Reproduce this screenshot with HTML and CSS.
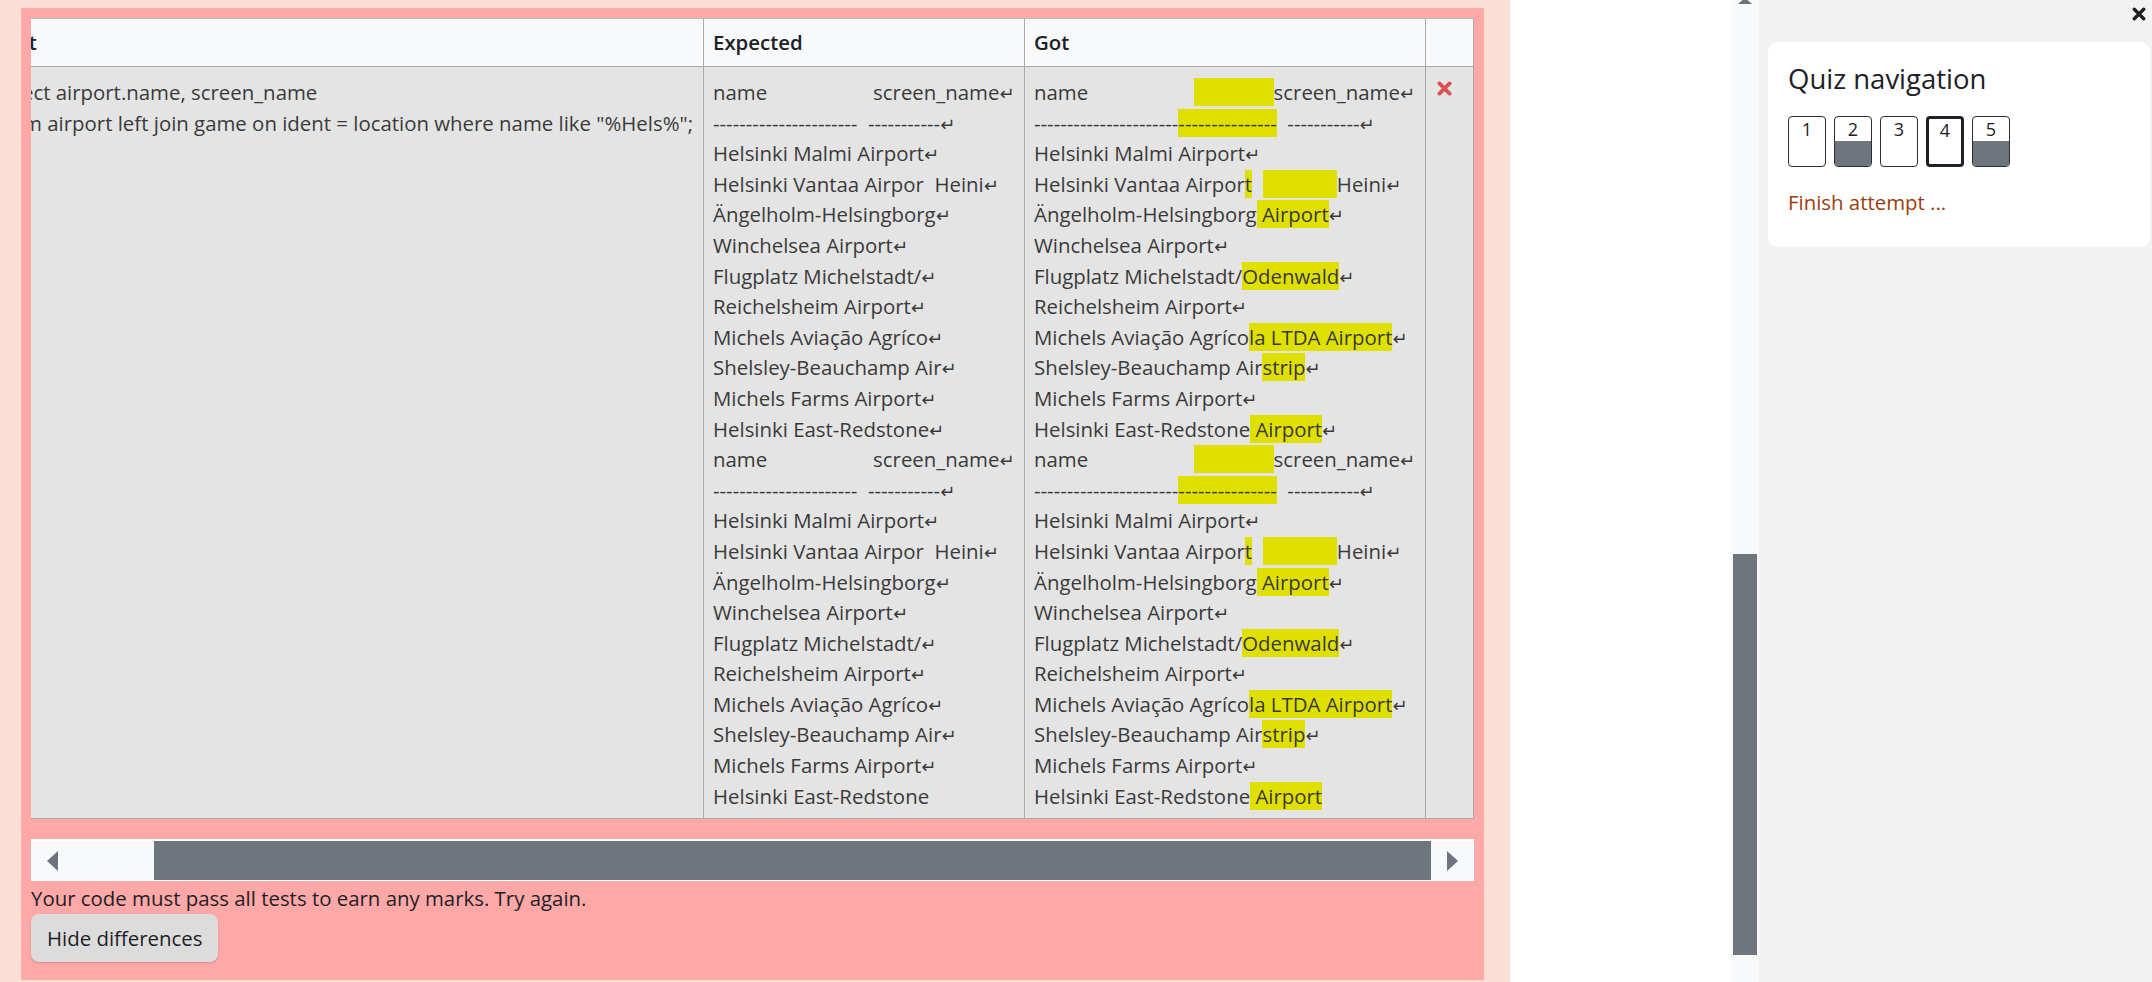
FILE: index.html
```html
<!DOCTYPE html>
<html lang="en">
<head>
<meta charset="utf-8">
<title>Quiz attempt</title>
<link rel="stylesheet" href="styles.css">
</head>
<body>
<div class="page">
  <div class="que">
    <div class="outcome">
      <div class="results">
        <table class="results-table">
          <thead>
            <tr>
              <th class="c-test">Test</th>
              <th class="c-exp">Expected</th>
              <th class="c-got">Got</th>
              <th class="c-mark"></th>
            </tr>
          </thead>
          <tbody>
            <tr>
              <td class="c-test"><pre>select airport.name, screen_name
from airport left join game on ident = location where name like "%Hels%";</pre></td>
              <td class="c-exp"><pre>name                    screen_name<span class="nl">↵</span>
----------------------  -----------<span class="nl">↵</span>
Helsinki Malmi Airport<span class="nl">↵</span>
Helsinki Vantaa Airpor  Heini<span class="nl">↵</span>
Ängelholm-Helsingborg<span class="nl">↵</span>
Winchelsea Airport<span class="nl">↵</span>
Flugplatz Michelstadt/<span class="nl">↵</span>
Reichelsheim Airport<span class="nl">↵</span>
Michels Aviação Agríco<span class="nl">↵</span>
Shelsley-Beauchamp Air<span class="nl">↵</span>
Michels Farms Airport<span class="nl">↵</span>
Helsinki East-Redstone<span class="nl">↵</span>
name                    screen_name<span class="nl">↵</span>
----------------------  -----------<span class="nl">↵</span>
Helsinki Malmi Airport<span class="nl">↵</span>
Helsinki Vantaa Airpor  Heini<span class="nl">↵</span>
Ängelholm-Helsingborg<span class="nl">↵</span>
Winchelsea Airport<span class="nl">↵</span>
Flugplatz Michelstadt/<span class="nl">↵</span>
Reichelsheim Airport<span class="nl">↵</span>
Michels Aviação Agríco<span class="nl">↵</span>
Shelsley-Beauchamp Air<span class="nl">↵</span>
Michels Farms Airport<span class="nl">↵</span>
Helsinki East-Redstone</pre></td>
              <td class="c-got"><pre>name                    <span class="hl">               </span>screen_name<span class="nl">↵</span>
----------------------<span class="hl">---------------</span>  -----------<span class="nl">↵</span>
Helsinki Malmi Airport<span class="nl">↵</span>
Helsinki Vantaa Airpor<span class="hl">t</span>  <span class="hl">              </span>Heini<span class="nl">↵</span>
Ängelholm-Helsingborg<span class="hl"> Airport</span><span class="nl">↵</span>
Winchelsea Airport<span class="nl">↵</span>
Flugplatz Michelstadt/<span class="hl">Odenwald</span><span class="nl">↵</span>
Reichelsheim Airport<span class="nl">↵</span>
Michels Aviação Agríco<span class="hl">la LTDA Airport</span><span class="nl">↵</span>
Shelsley-Beauchamp Air<span class="hl">strip</span><span class="nl">↵</span>
Michels Farms Airport<span class="nl">↵</span>
Helsinki East-Redstone<span class="hl"> Airport</span><span class="nl">↵</span>
name                    <span class="hl">               </span>screen_name<span class="nl">↵</span>
----------------------<span class="hl">---------------</span>  -----------<span class="nl">↵</span>
Helsinki Malmi Airport<span class="nl">↵</span>
Helsinki Vantaa Airpor<span class="hl">t</span>  <span class="hl">              </span>Heini<span class="nl">↵</span>
Ängelholm-Helsingborg<span class="hl"> Airport</span><span class="nl">↵</span>
Winchelsea Airport<span class="nl">↵</span>
Flugplatz Michelstadt/<span class="hl">Odenwald</span><span class="nl">↵</span>
Reichelsheim Airport<span class="nl">↵</span>
Michels Aviação Agríco<span class="hl">la LTDA Airport</span><span class="nl">↵</span>
Shelsley-Beauchamp Air<span class="hl">strip</span><span class="nl">↵</span>
Michels Farms Airport<span class="nl">↵</span>
Helsinki East-Redstone<span class="hl"> Airport</span></pre></td>
              <td class="c-mark">
                <svg class="icon-fail" width="15" height="15" viewBox="0 0 15 15" aria-label="Incorrect"><path d="M2.4 2.4 L12.6 12.6 M12.6 2.4 L2.4 12.6" stroke="#dc5151" stroke-width="3.8" stroke-linecap="round" fill="none"/></svg>
              </td>
            </tr>
          </tbody>
        </table>
      </div>
      <div class="hscroll">
        <div class="hs-btn">
          <svg width="11" height="20" viewBox="0 0 11 20"><polygon points="11,0 11,20 0,10" fill="#6c737c"/></svg>
        </div>
        <div class="hs-track"></div>
        <div class="hs-thumb"></div>
        <div class="hs-btn">
          <svg width="11" height="20" viewBox="0 0 11 20"><polygon points="0,0 0,20 11,10" fill="#6c737c"/></svg>
        </div>
      </div>
      <p class="msg">Your code must pass all tests to earn any marks. Try again.</p>
      <button class="btn" type="button">Hide differences</button>
    </div>
  </div>
  <div class="blank"></div>
</div>
<div class="vscroll">
  <svg class="vs-up" width="14" height="4" viewBox="0 0 14 4"><polygon points="4.5,0 9.5,0 14,4 0,4" fill="#6c737c"/></svg>
  <div class="vs-thumb"></div>
</div>
<aside class="drawer">
  <div class="drawer-head">
    <svg class="icon-close" width="14" height="14" viewBox="0 0 14 14" aria-label="Close"><path d="M2.3 2.3 L11.7 11.7 M11.7 2.3 L2.3 11.7" stroke="#1d2125" stroke-width="3.4" stroke-linecap="round" fill="none"/></svg>
  </div>
  <section class="card">
    <h3 class="card-title">Quiz navigation</h3>
    <div class="qnav">
      <span class="qn"><span class="qn-num">1</span><span class="qn-fill"></span></span>
      <span class="qn saved"><span class="qn-num">2</span><span class="qn-fill"></span></span>
      <span class="qn"><span class="qn-num">3</span><span class="qn-fill"></span></span>
      <span class="qn current"><span class="qn-num">4</span><span class="qn-fill"></span></span>
      <span class="qn saved"><span class="qn-num">5</span><span class="qn-fill"></span></span>
    </div>
    <a class="finish" href="#">Finish attempt ...</a>
  </section>
</aside>
</body>
</html>
```

FILE: styles.css
```css
html, body {
  margin: 0;
  padding: 0;
}

body {
  display: flex;
  width: 2152px;
  height: 982px;
  overflow: hidden;
  font-family: "Open Sans", "DejaVu Sans", sans-serif;
  font-size: 20.4px;
  line-height: 30.6px;
  color: #1d2125;
  background: #ffffff;
}

/* ---------- main page column ---------- */
.page {
  width: 1731px;
  flex-shrink: 0;
  display: flex;
  background: #ffffff;
}

.que {
  width: 1510px;
  flex-shrink: 0;
  box-sizing: border-box;
  padding: 8px 26px 2px 21px;
  background: #fbdfd4;
}

.outcome {
  height: 100%;
  box-sizing: border-box;
  padding: 10px 10px 19px 10px;
  background: #ffa8a8;
}

.blank {
  flex: 1;
}

/* ---------- results table (scrolled to its right end) ---------- */
.results {
  display: flex;
  justify-content: flex-end;
  overflow: hidden;
}

.results-table {
  flex-shrink: 0;
  border-collapse: separate;
  border-spacing: 0;
  border-top: 1px solid #b9b9b9;
  border-right: 1px solid #aaaaaa;
  border-bottom: 1px solid #aaaaaa;
}

.results-table th,
.results-table td {
  box-sizing: border-box;
  padding: 0 9px 0 9px;
  text-align: left;
  vertical-align: top;
}

.results-table th {
  height: 48px;
  vertical-align: middle;
  background: #f8f9fb;
  border-bottom: 1px solid #aaaaaa;
  font-weight: 600;
  color: #1d2125;
}

.results-table td {
  padding-top: 10px;
  padding-bottom: 7px;
  background: #e4e4e4;
  color: #3a3a3a;
}

.results-table .c-test {
  padding-left: 10px;
  padding-right: 10px;
}

.results-table .c-exp,
.results-table .c-got,
.results-table .c-mark {
  border-left: 1px solid #aaaaaa;
}

.results-table .c-exp {
  width: 321px;
}

.results-table .c-got {
  width: 401px;
}

.results-table .c-mark {
  width: 48px;
}

.results-table pre {
  margin: 0;
  font-family: inherit;
  font-size: inherit;
  line-height: inherit;
  white-space: pre;
}

.hl {
  background: #e0e000;
}

.nl {
  font-family: "DejaVu Sans", sans-serif;
  font-size: 0.88em;
  line-height: 0;
  color: #3a3a3a;
}

.icon-fail {
  display: block;
  margin: 4px 0 0 2px;
}

/* ---------- fake horizontal scrollbar ---------- */
.hscroll {
  display: flex;
  height: 42px;
  margin-top: 20px;
  box-sizing: border-box;
  background: #f8f9fa;
  border-top: 2px solid #ffffff;
  border-bottom: 1px solid #ffffff;
}

.hs-btn {
  width: 43px;
  flex-shrink: 0;
  display: flex;
  align-items: center;
  justify-content: center;
}

.hs-track {
  width: 80px;
  flex-shrink: 0;
}

.hs-thumb {
  flex: 1;
  background: #6f757d;
}

.msg {
  margin: 2px 0 0 0;
  color: #1d2125;
}

.btn {
  display: block;
  height: 48px;
  margin: 0;
  padding: 0 16px;
  border: none;
  border-radius: 8px;
  background: #dcdcdc;
  box-shadow: 0 1px 2px rgba(0, 0, 0, 0.18);
  font-family: inherit;
  font-size: 20.4px;
  line-height: 30.6px;
  color: #1d2125;
}

/* ---------- page vertical scrollbar ---------- */
.vscroll {
  width: 28px;
  flex-shrink: 0;
  display: flex;
  flex-direction: column;
  align-items: center;
  background: #f8f9fa;
}

.vs-up {
  display: block;
}

.vs-thumb {
  width: 24px;
  height: 401px;
  margin-top: 550px;
  background: #6f757d;
}

/* ---------- right drawer ---------- */
.drawer {
  flex: 1;
  background: #f2f2f2;
  display: flex;
  flex-direction: column;
}

.drawer-head {
  height: 42px;
  box-sizing: border-box;
  display: flex;
  justify-content: flex-end;
  padding: 7px 6px 0 0;
}

.icon-close {
  display: block;
}

.card {
  width: 382px;
  margin-left: 9px;
  box-sizing: border-box;
  padding: 20px 20px 29px 20px;
  background: #ffffff;
  border-radius: 10px;
}

.card-title {
  margin: 0;
  font-size: 27.5px;
  line-height: 33px;
  font-weight: 500;
  color: #1d2125;
}

.qnav {
  display: flex;
  gap: 8px;
  margin-top: 21px;
}

.qn {
  width: 38px;
  height: 51px;
  box-sizing: border-box;
  display: flex;
  flex-direction: column;
  border: 1px solid #2b2f33;
  border-radius: 4px;
  overflow: hidden;
  background: #ffffff;
}

.qn-num {
  height: 24px;
  flex-shrink: 0;
  font-size: 18px;
  line-height: 24px;
  text-align: center;
  color: #1d2125;
}

.qn-fill {
  flex: 1;
}

.qn.saved .qn-fill {
  background: #6f757d;
}

.qn.current {
  border: 3px solid #1d2125;
}

.qn.current .qn-num {
  height: 22px;
  line-height: 22px;
}

.finish {
  display: block;
  margin-top: 20px;
  color: #9c3d0b;
  text-decoration: none;
}
```
